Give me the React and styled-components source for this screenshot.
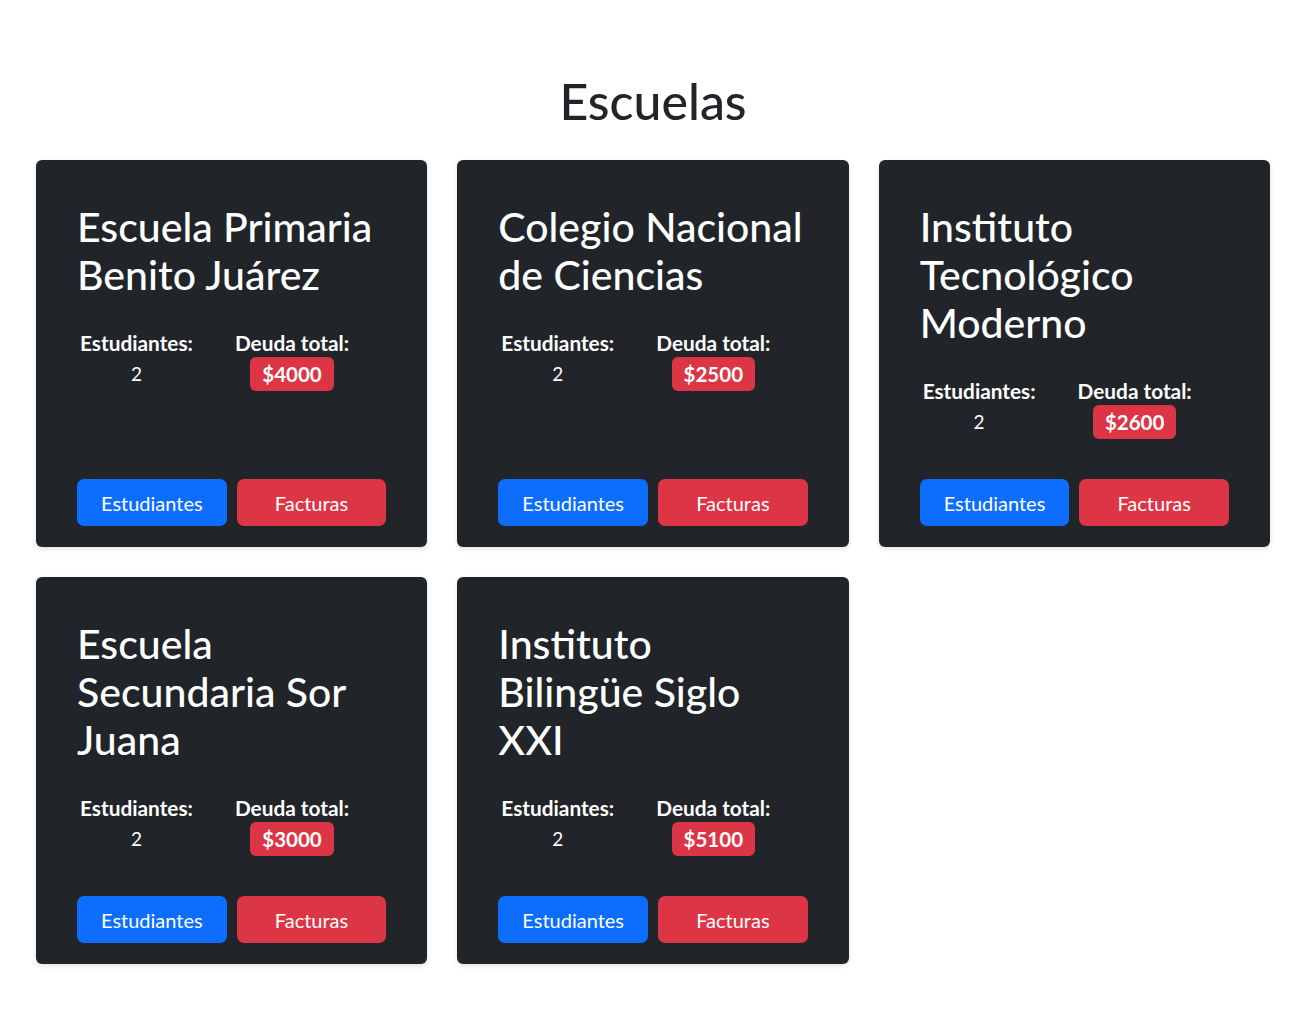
import React from "react";
import styled, { createGlobalStyle } from "styled-components";

const Global = createGlobalStyle`
  html, body { margin: 0; padding: 0; background: #fff; }
  body { font-family: "Lato", "Noto Sans", sans-serif; color: #212529; }
  * { box-sizing: border-box; }
`;

const Page = styled.div`
  padding: 72px 31px 40px 36px;
`;

const Heading = styled.h1`
  margin: 0 0 29px;
  text-align: center;
  font-size: 50px;
  font-weight: 500;
  line-height: 59px;
  color: #212529;
`;

const Grid = styled.div`
  display: grid;
  grid-template-columns: repeat(3, 1fr);
  gap: 30px;
`;

const Card = styled.div`
  background: #212529;
  border-radius: 6px;
  box-shadow: 0 2px 5px rgba(0, 0, 0, 0.12);
  padding: 40px 41px 21px;
  display: flex;
  flex-direction: column;
  color: #fff;
`;

const Title = styled.h2`
  margin: 3px 0 32px;
  font-size: 41px;
  font-weight: 500;
  line-height: 48px;
`;

const Line = styled.span`
  display: block;
  white-space: nowrap;
`;

const Stats = styled.div`
  display: flex;
  gap: 42px;
  padding-left: 3px;
`;

const Stat = styled.div`
  display: flex;
  flex-direction: column;
  align-items: center;
`;

const Label = styled.div`
  font-size: 20.8px;
  font-weight: 700;
  line-height: 24px;
`;

const Value = styled.div`
  margin-top: 2px;
  font-size: 19px;
  line-height: 34px;
`;

const Badge = styled.span`
  margin-top: 2px;
  display: inline-block;
  background: #dc3545;
  color: #fff;
  font-weight: 700;
  font-size: 20.5px;
  line-height: 34px;
  padding: 0 12px;
  border-radius: 6px;
`;

const Actions = styled.div`
  margin-top: auto;
  padding-top: 40px;
  display: flex;
  gap: 10px;
`;

const Button = styled.button`
  flex: 1;
  height: 47px;
  border: none;
  border-radius: 7px;
  font-family: inherit;
  font-size: 20px;
  color: #fff;
  background: ${(p) => (p.$variant === "danger" ? "#dc3545" : "#0d6efd")};
  cursor: pointer;
`;

const schools = [
  { name: ["Escuela Primaria", "Benito Juárez"], students: 2, debt: 4000 },
  { name: ["Colegio Nacional", "de Ciencias"], students: 2, debt: 2500 },
  { name: ["Instituto", "Tecnológico", "Moderno"], students: 2, debt: 2600 },
  { name: ["Escuela", "Secundaria Sor", "Juana"], students: 2, debt: 3000 },
  { name: ["Instituto", "Bilingüe Siglo", "XXI"], students: 2, debt: 5100 },
];

export default function App() {
  return (
    <>
      <Global />
      <Page>
        <Heading>Escuelas</Heading>
        <Grid>
          {schools.map((s, i) => (
            <Card key={i}>
              <Title>
                {s.name.map((l, j) => (
                  <Line key={j}>{l}</Line>
                ))}
              </Title>
              <Stats>
                <Stat>
                  <Label>Estudiantes:</Label>
                  <Value>{s.students}</Value>
                </Stat>
                <Stat>
                  <Label>Deuda total:</Label>
                  <Badge>${s.debt}</Badge>
                </Stat>
              </Stats>
              <Actions>
                <Button>Estudiantes</Button>
                <Button $variant="danger">Facturas</Button>
              </Actions>
            </Card>
          ))}
        </Grid>
      </Page>
    </>
  );
}
